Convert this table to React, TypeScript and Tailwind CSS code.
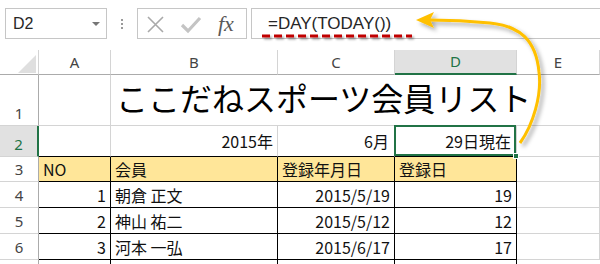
import React from "react";

const colHeads = ["A", "B", "C", "D", "E"];

const members = [
  { no: "1", name: "朝倉 正文", date: "2015/5/19", day: "19" },
  { no: "2", name: "神山 祐二", date: "2015/5/12", day: "12" },
  { no: "3", name: "河本 一弘", date: "2015/6/17", day: "17" },
];

function FormulaBar() {
  return (
    <div className="flex h-[50px] items-start pl-[5px] pt-[8px] font-['Liberation_Sans',sans-serif] text-[16px] text-[#262626]">
      {/* name box */}
      <div className="flex h-[31px] w-[102px] items-center justify-between border border-[#c6c6c6] pl-[7px] pr-[6px]">
        <span>D2</span>
        <span className="h-0 w-0 border-x-[4px] border-t-[4px] border-x-transparent border-t-[#767676]" />
      </div>

      {/* grip dots */}
      <div className="flex h-[31px] w-[30px] flex-col items-center justify-center gap-[2px]">
        <span className="h-[2px] w-[2px] bg-[#9a9a9a]" />
        <span className="h-[2px] w-[2px] bg-[#9a9a9a]" />
        <span className="h-[2px] w-[2px] bg-[#9a9a9a]" />
      </div>

      {/* cancel / enter / fx */}
      <div className="flex h-[31px] w-[110px] items-center border border-[#c6c6c6]">
        <svg width="70" height="29" viewBox="0 0 70 29" className="ml-[8px]">
          <path d="M2 8 L17 23 M17 8 L2 23" stroke="#a9a9a9" strokeWidth="1.6" fill="none" />
          <path d="M36 16 L42 22 L54 9" stroke="#c4c4c4" strokeWidth="3.2" fill="none" />
        </svg>
        <span className="ml-[2px] font-['Liberation_Serif',serif] text-[22px] italic leading-none text-[#595959]">
          fx
        </span>
      </div>

      {/* formula input */}
      <div className="relative ml-[4px] flex h-[31px] flex-1 items-center border border-r-0 border-[#c6c6c6] pl-[16px] text-[17px]">
        <span>=DAY(TODAY())</span>
        <svg
          width="160"
          height="12"
          className="absolute left-[10px] top-[23px] overflow-visible"
        >
          <defs>
            <filter
              id="ushadow"
              filterUnits="userSpaceOnUse"
              x="-10"
              y="-10"
              width="180"
              height="30"
            >
              <feDropShadow dx="2" dy="2" stdDeviation="1.2" floodColor="#000" floodOpacity="0.35" />
            </filter>
          </defs>
          <line
            x1="0"
            y1="4"
            x2="150"
            y2="4"
            stroke="#c00000"
            strokeWidth="3"
            strokeDasharray="8 4"
            filter="url(#ushadow)"
          />
        </svg>
      </div>
    </div>
  );
}

function Sheet() {
  const rowHead =
    "flex items-end justify-center border-b border-r border-b-[#d4d4d4] border-r-[#ababab] pb-[2px] font-['Noto_Sans',sans-serif] text-[15px] leading-[20px] text-[#444]";
  const grid = "border-b border-r border-[#d4d4d4]";
  const tbl = "flex items-center border-b border-r border-black px-[4px] text-[16px] leading-none";

  return (
    <div className="grid grid-cols-[39px_72px_167px_117px_122px_1fr] grid-rows-[25px_51px_31px_25px_26px_26px_26px_4px] text-[#111]">
      {/* column headers */}
      <div className="relative border-b border-r border-b-[#ababab] border-r-[#d4d4d4]">
        <svg width="39" height="25" className="absolute left-0 top-0">
          <polygon points="36,5 36,23 18,23" fill="#dfdfdf" />
        </svg>
      </div>
      {colHeads.map((c) =>
        c === "D" ? (
          <div
            key={c}
            className="flex items-center justify-center border-b-2 border-r border-b-[#217346] border-r-[#d4d4d4] bg-[#e1e1e1] font-['Noto_Sans',sans-serif] text-[15px] text-[#217346]"
          >
            {c}
          </div>
        ) : (
          <div
            key={c}
            className="flex items-center justify-center border-b border-r border-b-[#ababab] border-r-[#d4d4d4] font-['Noto_Sans',sans-serif] text-[15px] text-[#444]"
          >
            {c}
          </div>
        )
      )}

      {/* row 1 : title */}
      <div className={rowHead}>1</div>
      <div className={grid} />
      <div className="col-span-4 flex items-end overflow-visible whitespace-nowrap border-b border-[#d4d4d4] pb-[12px] pl-[5px] text-[32px] leading-none text-black">
        ここだねスポーツ会員リスト
      </div>

      {/* row 2 */}
      <div className="flex items-end justify-center border-b border-r-2 border-b-[#d4d4d4] border-r-[#217346] bg-[#e1e1e1] pb-[2px] font-['Noto_Sans',sans-serif] text-[15px] leading-[20px] text-[#217346]">
        2
      </div>
      <div className="border-b border-r border-b-black border-r-[#d4d4d4]" />
      <div className="flex items-center justify-end border-b border-r border-b-black border-r-[#d4d4d4] px-[4px] text-[16px] leading-none">
        2015年
      </div>
      <div className="flex items-center justify-end border-b border-r border-b-black border-r-[#d4d4d4] px-[5px] text-[16px] leading-none">
        6月
      </div>
      <div className="relative flex items-center justify-end border-b border-r border-b-black border-r-[#d4d4d4] px-[5px] text-[16px] leading-none">
        29日現在
        <div className="absolute -left-px -top-px bottom-0 right-0 border-2 border-[#217346]" />
        <div className="absolute -bottom-[3px] -right-[3px] h-[6px] w-[6px] border border-white bg-[#217346]" />
      </div>
      <div className={grid} />

      {/* row 3 : table header */}
      <div className={rowHead}>3</div>
      <div className={`${tbl} bg-[#ffe699]`}>NO</div>
      <div className={`${tbl} bg-[#ffe699]`}>会員</div>
      <div className={`${tbl} bg-[#ffe699]`}>登録年月日</div>
      <div className={`${tbl} bg-[#ffe699]`}>登録日</div>
      <div className={grid} />

      {/* rows 4-6 */}
      {members.map((m, i) => (
        <React.Fragment key={m.no}>
          <div className={rowHead}>{i + 4}</div>
          <div className={`${tbl} justify-end`}>{m.no}</div>
          <div className={tbl}>{m.name}</div>
          <div className={`${tbl} justify-end`}>{m.date}</div>
          <div className={`${tbl} justify-end`}>{m.day}</div>
          <div className={grid} />
        </React.Fragment>
      ))}

      {/* row 7 (cut off) */}
      <div className="border-r border-r-[#ababab]" />
      <div className="border-r border-black" />
      <div className="border-r border-black" />
      <div className="border-r border-black" />
      <div className="border-r border-black" />
      <div />
    </div>
  );
}

function Arrow() {
  return (
    <svg
      width="600"
      height="264"
      className="pointer-events-none absolute left-0 top-0"
    >
      <defs>
        <filter id="ashadow" x="-20%" y="-20%" width="140%" height="140%">
          <feDropShadow dx="3" dy="3" stdDeviation="2" floodColor="#000" floodOpacity="0.35" />
        </filter>
      </defs>
      <g filter="url(#ashadow)">
        <path
          d="M520 143 C533 125, 542 95, 539 72 C536 40, 520 26, 490 23 C470 21, 450 20, 430 20"
          stroke="#ffc000"
          strokeWidth="3"
          fill="none"
        />
        <polygon points="416,20 434,12 430,20 434,28" fill="#ffc000" />
      </g>
    </svg>
  );
}

export default function App() {
  return (
    <div className="relative h-[264px] w-[600px] overflow-hidden bg-white font-['Noto_Sans_CJK_JP',sans-serif]">
      <FormulaBar />
      <Sheet />
      <Arrow />
    </div>
  );
}
